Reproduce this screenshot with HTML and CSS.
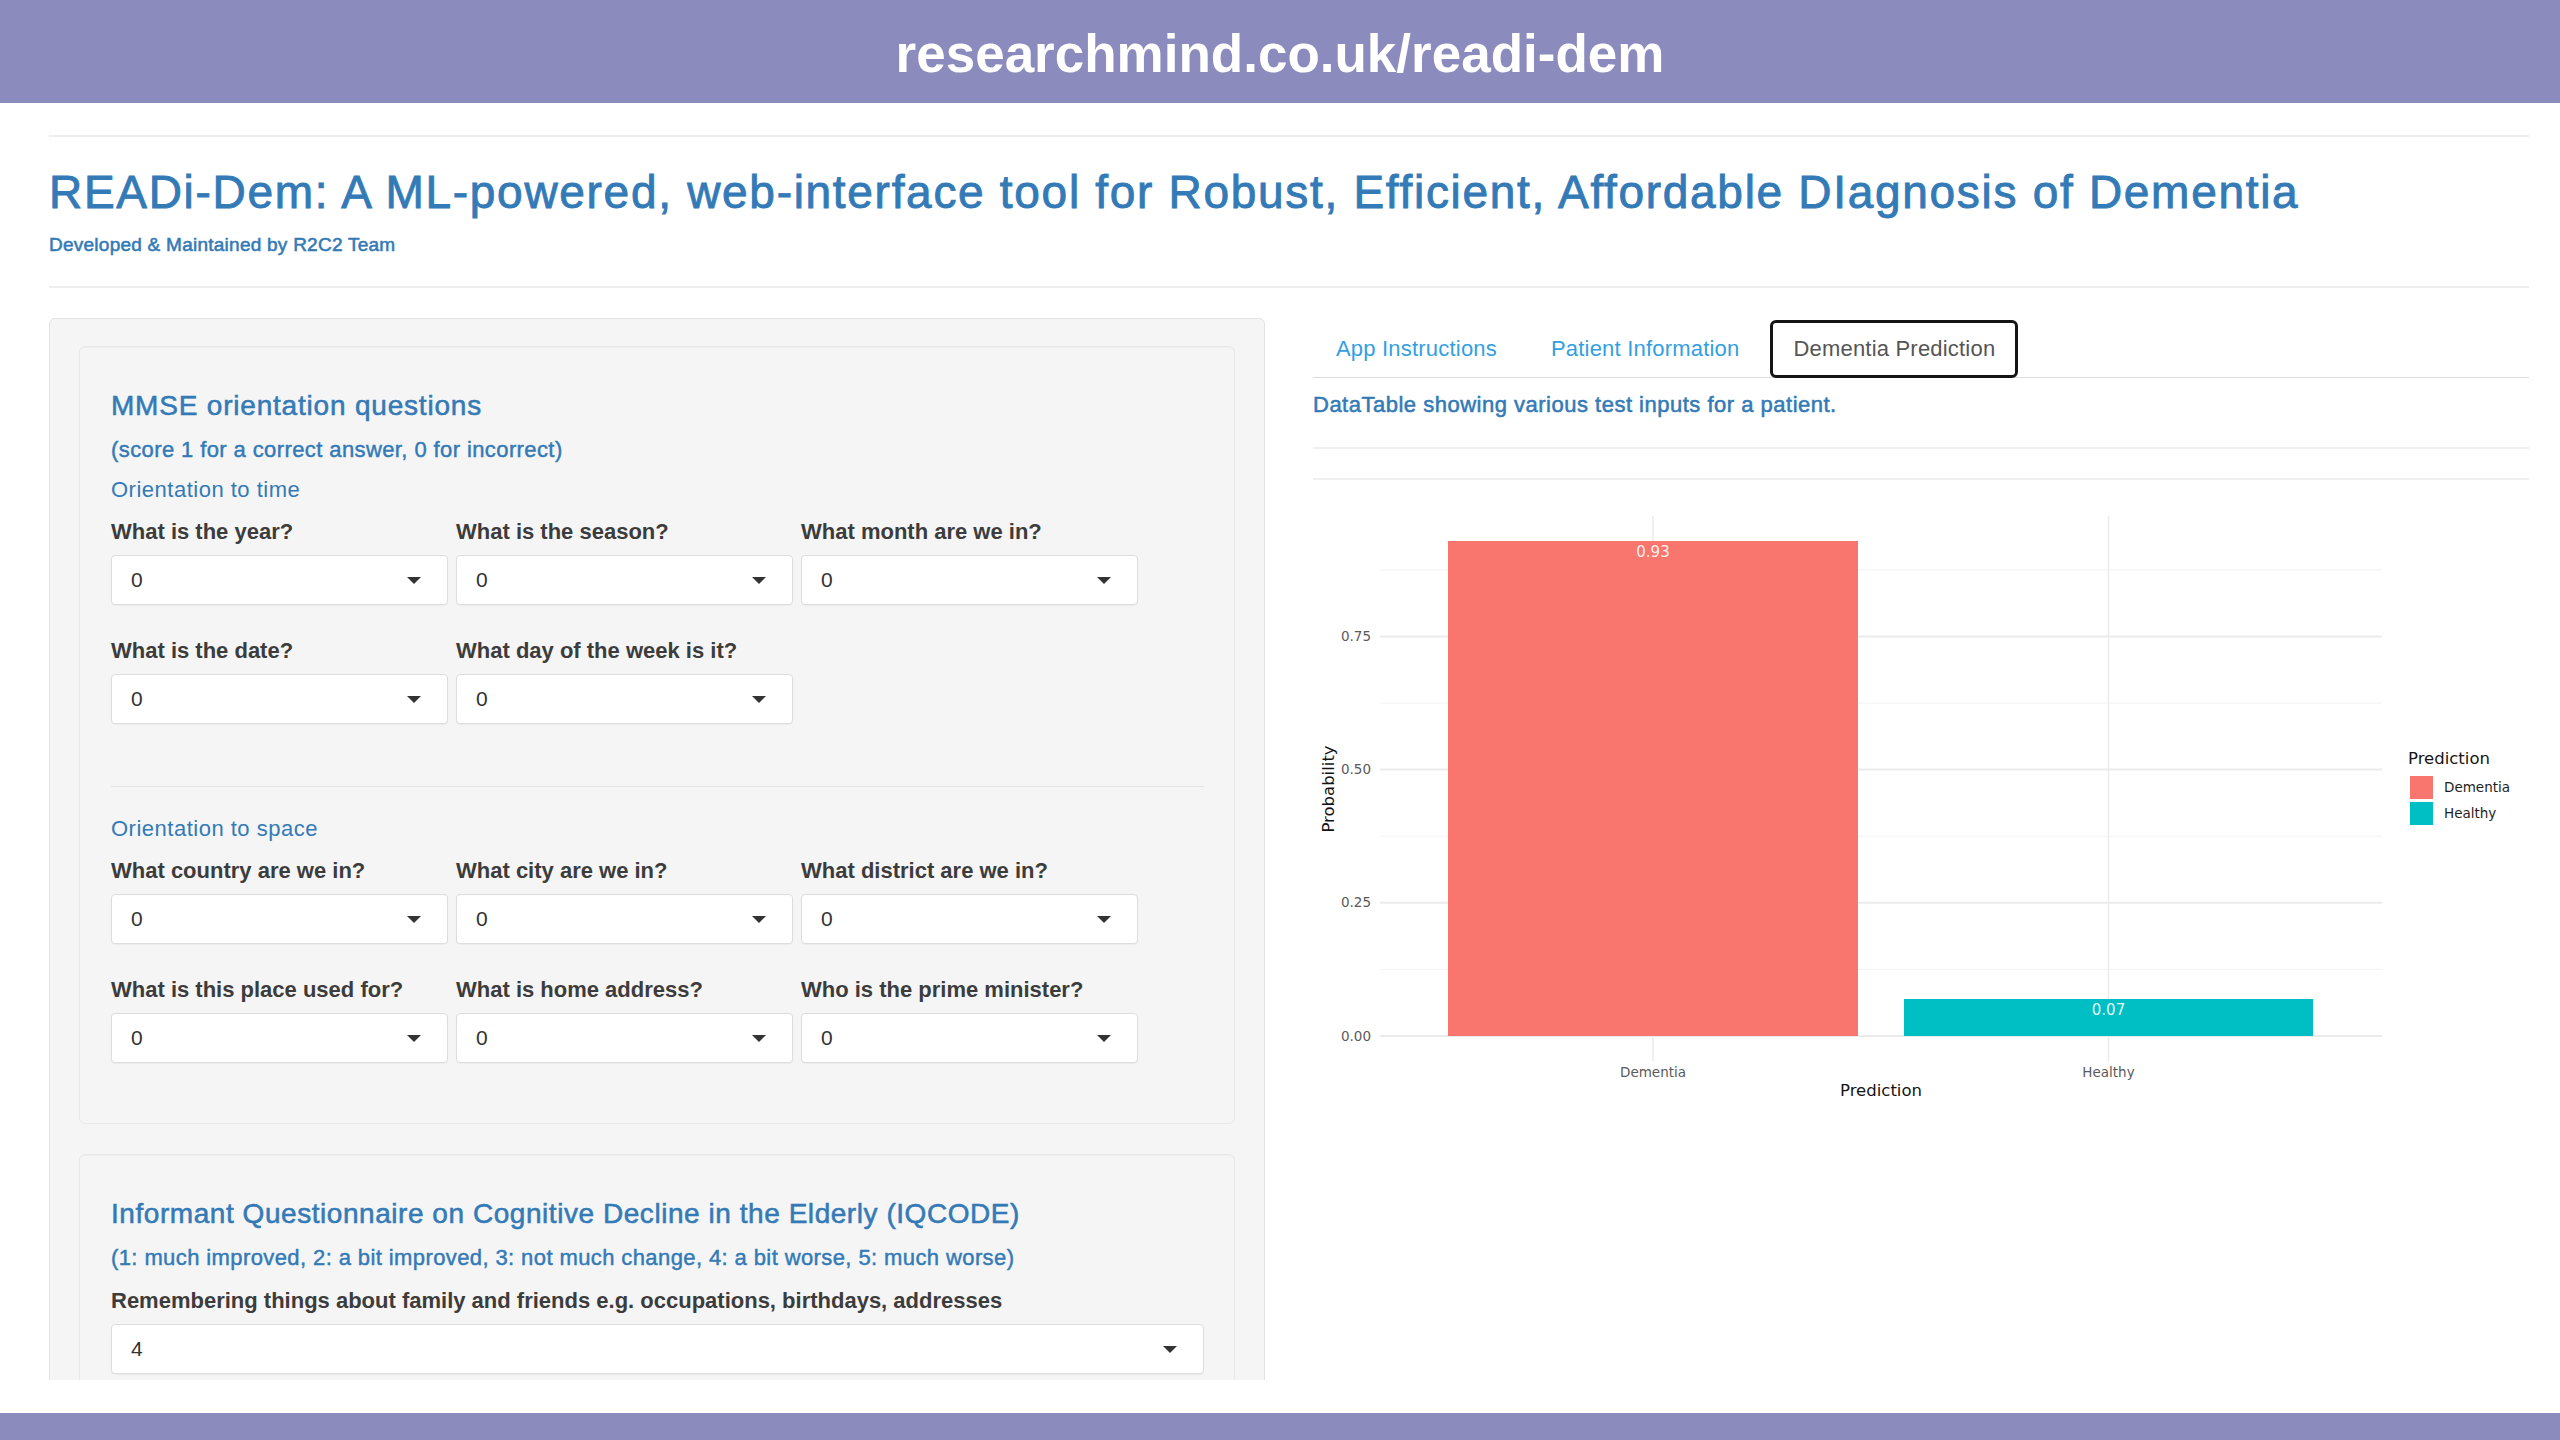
FILE: index.html
```html
<!DOCTYPE html>
<html lang="en">
  <head>
    <meta charset="UTF-8"/>
    <meta name="viewport" content="width=device-width, initial-scale=1.0">
    <link rel="stylesheet" href="styles.css">
    <title>READi-Dem</title>
  </head>
  <body>
    <header class="topbar">
      <p class="topbar_url">researchmind.co.uk/readi-dem</p>
    </header>

    <div class="page">
      <div class="page_inner">
        <hr class="pageRule"/>
        <h1 class="appTitle">READi-Dem: A ML-powered, web-interface tool for Robust, Efficient, Affordable DIagnosis of Dementia</h1>
        <p class="appSubtitle">Developed &amp; Maintained by R2C2 Team</p>
        <hr class="pageRule pageRule_bottom"/>

        <div class="layout">
          <!-- inputs -->
          <div class="sidebar">
            <div class="questionBlock">
              <h4 class="questionBlock_title questionBlock_title_mmse">MMSE orientation questions</h4>
              <h5 class="questionBlock_hint">(score 1 for a correct answer, 0 for incorrect)</h5>
              <p class="questionBlock_section">Orientation to time</p>
              <div class="selectGrid">
                <div class="field">
                  <label class="field_label">What is the year?</label>
                  <div class="fakeSelect"><span>0</span><span class="fakeSelect_caret"></span></div>
                </div>
                <div class="field">
                  <label class="field_label">What is the season?</label>
                  <div class="fakeSelect"><span>0</span><span class="fakeSelect_caret"></span></div>
                </div>
                <div class="field">
                  <label class="field_label">What month are we in?</label>
                  <div class="fakeSelect"><span>0</span><span class="fakeSelect_caret"></span></div>
                </div>
                <div class="field">
                  <label class="field_label">What is the date?</label>
                  <div class="fakeSelect"><span>0</span><span class="fakeSelect_caret"></span></div>
                </div>
                <div class="field">
                  <label class="field_label">What day of the week is it?</label>
                  <div class="fakeSelect"><span>0</span><span class="fakeSelect_caret"></span></div>
                </div>
              </div>

              <hr class="questionBlock_rule"/>

              <p class="questionBlock_section questionBlock_section_space">Orientation to space</p>
              <div class="selectGrid">
                <div class="field">
                  <label class="field_label">What country are we in?</label>
                  <div class="fakeSelect"><span>0</span><span class="fakeSelect_caret"></span></div>
                </div>
                <div class="field">
                  <label class="field_label">What city are we in?</label>
                  <div class="fakeSelect"><span>0</span><span class="fakeSelect_caret"></span></div>
                </div>
                <div class="field">
                  <label class="field_label">What district are we in?</label>
                  <div class="fakeSelect"><span>0</span><span class="fakeSelect_caret"></span></div>
                </div>
                <div class="field">
                  <label class="field_label">What is this place used for?</label>
                  <div class="fakeSelect"><span>0</span><span class="fakeSelect_caret"></span></div>
                </div>
                <div class="field">
                  <label class="field_label">What is home address?</label>
                  <div class="fakeSelect"><span>0</span><span class="fakeSelect_caret"></span></div>
                </div>
                <div class="field">
                  <label class="field_label">Who is the prime minister?</label>
                  <div class="fakeSelect"><span>0</span><span class="fakeSelect_caret"></span></div>
                </div>
              </div>
            </div>

            <div class="questionBlock">
              <h4 class="questionBlock_title">Informant Questionnaire on Cognitive Decline in the Elderly (IQCODE)</h4>
              <h5 class="questionBlock_hint">(1: much improved, 2: a bit improved, 3: not much change, 4: a bit worse, 5: much worse)</h5>
              <div class="field field_wide">
                <label class="field_label">Remembering things about family and friends e.g. occupations, birthdays, addresses</label>
                <div class="fakeSelect"><span>4</span><span class="fakeSelect_caret"></span></div>
              </div>
            </div>
          </div>

          <!-- results -->
          <div class="results">
            <ul class="tabs">
              <li class="tabs_item">App Instructions</li>
              <li class="tabs_item">Patient Information</li>
              <li class="tabs_item tabs_item_active">Dementia Prediction</li>
            </ul>
            <h5 class="results_caption">DataTable showing various test inputs for a patient.</h5>
            <hr class="results_rule"/>
            <hr class="results_rule results_rule_second"/>

            <svg class="predictionPlot" width="1216" height="600" viewBox="0 0 1216 600">
              <!-- minor grid -->
              <g stroke="#f2f2f2" stroke-width="1">
                <line x1="67" y1="470.4" x2="1069" y2="470.4"/>
                <line x1="67" y1="337.2" x2="1069" y2="337.2"/>
                <line x1="67" y1="204.1" x2="1069" y2="204.1"/>
                <line x1="67" y1="70.9" x2="1069" y2="70.9"/>
              </g>
              <!-- major grid -->
              <g stroke="#ebebeb" stroke-width="2">
                <line x1="67" y1="537" x2="1069" y2="537"/>
                <line x1="67" y1="403.8" x2="1069" y2="403.8"/>
                <line x1="67" y1="270.6" x2="1069" y2="270.6"/>
                <line x1="67" y1="137.5" x2="1069" y2="137.5"/>
                <line x1="340" y1="17" x2="340" y2="562" stroke-width="1.5"/>
                <line x1="795.5" y1="17" x2="795.5" y2="562" stroke-width="1.5"/>
              </g>

              <rect x="135" y="42" width="410" height="495" fill="#f8766d"/>
              <rect x="591" y="500" width="409" height="37" fill="#00bfc4"/>

              <g class="plotText plotText_bar" text-anchor="middle">
                <text x="340" y="58">0.93</text>
                <text x="795.5" y="516">0.07</text>
              </g>

              <g class="plotText plotText_tick" text-anchor="end">
                <text x="58" y="541.5">0.00</text>
                <text x="58" y="408.3">0.25</text>
                <text x="58" y="275.1">0.50</text>
                <text x="58" y="142">0.75</text>
              </g>
              <g class="plotText plotText_tick" text-anchor="middle">
                <text x="340" y="578">Dementia</text>
                <text x="795.5" y="578">Healthy</text>
              </g>

              <g class="plotText plotText_title">
                <text x="568" y="597" text-anchor="middle">Prediction</text>
                <text x="0" y="0" text-anchor="middle" transform="translate(21 290) rotate(-90)">Probability</text>
                <text x="1095" y="265">Prediction</text>
              </g>

              <!-- legend -->
              <rect x="1097" y="277" width="23" height="23" fill="#f8766d"/>
              <rect x="1097" y="303" width="23" height="23" fill="#00bfc4"/>
              <g class="plotText plotText_legend">
                <text x="1131" y="293">Dementia</text>
                <text x="1131" y="319">Healthy</text>
              </g>
            </svg>
          </div>
        </div>
      </div>
    </div>

    <div class="pageGap"></div>
    <footer class="bottombar"></footer>
  </body>
</html>
```

FILE: styles.css
```css
* {
  box-sizing: border-box;
}

body {
  margin: 0;
  width: 2560px;
  height: 1440px;
  overflow: hidden;
  background-color: rgb(255, 255, 255);
  font-family: "Liberation Sans", Arial, sans-serif;
  color: rgb(51, 51, 51);
}

/* purple bars */
.topbar {
  height: 103px;
  padding-top: 27px;
  background-color: rgb(140, 139, 189);
}
  .topbar_url {
    margin: 0;
    text-align: center;
    font-size: 53px;
    line-height: 1;
    font-weight: bold;
    color: rgb(255, 255, 255);
  }

.pageGap {
  height: 33px;
}

.bottombar {
  height: 27px;
  background-color: rgb(140, 139, 189);
}

/* page */
.page {
  height: 1277px;
  overflow: hidden;
}
  .page_inner {
    padding: 0 31px 0 49px;
  }

.pageRule {
  margin: 32px 0 0 0;
  height: 0;
  border: 0;
  border-top: 2px solid rgb(238, 238, 238);
}
  .pageRule_bottom {
    margin-top: 29px;
  }

.appTitle {
  margin: 30px 0 0 0;
  font-size: 46px;
  line-height: 50px;
  font-weight: normal;
  letter-spacing: 1.7px;
  color: rgb(51, 122, 183);
  -webkit-text-stroke: 0.9px rgb(51, 122, 183);
  white-space: nowrap;
}

.appSubtitle {
  margin: 16px 0 0 0;
  font-size: 19px;
  line-height: 24px;
  letter-spacing: 0.25px;
  color: rgb(51, 122, 183);
  -webkit-text-stroke: 0.55px rgb(51, 122, 183);
}

.layout {
  display: flex;
  gap: 48px;
  margin-top: 30px;
  align-items: flex-start;
}

/* left well */
.sidebar {
  width: 1216px;
  flex-shrink: 0;
  padding: 27px 29px 0 29px;
  background-color: rgb(245, 245, 245);
  border: 1px solid rgb(227, 227, 227);
  border-radius: 6px;
  display: flex;
  flex-direction: column;
  gap: 30px;
}
  .questionBlock {
    padding: 42px 30px 60px 31px;
    background-color: rgb(245, 245, 245);
    border: 1px solid rgb(232, 232, 232);
    border-radius: 6px;
    box-shadow: inset 0 1px 1px rgba(0, 0, 0, 0.03);
  }
    .questionBlock_title {
      margin: 0;
      font-size: 28px;
      line-height: 34px;
      font-weight: normal;
      letter-spacing: 0.55px;
      color: rgb(51, 122, 183);
      -webkit-text-stroke: 0.55px rgb(51, 122, 183);
    }
    .questionBlock_title_mmse {
      letter-spacing: 0.8px;
    }
    .questionBlock_hint {
      margin: 13px 0 0 0;
      font-size: 22px;
      line-height: 28px;
      font-weight: normal;
      letter-spacing: 0.4px;
      color: rgb(51, 122, 183);
      -webkit-text-stroke: 0.45px rgb(51, 122, 183);
    }
    .questionBlock_section {
      margin: 13px 0 0 0;
      font-size: 22px;
      line-height: 26px;
      letter-spacing: 0.5px;
      color: rgb(51, 122, 183);
    }
    .questionBlock_section_space {
      margin-top: 29px;
    }
    .questionBlock_rule {
      margin: 62px 0 0 0;
      height: 0;
      border: 0;
      border-top: 1px solid rgb(228, 228, 228);
    }

.selectGrid {
  display: grid;
  grid-template-columns: repeat(3, 337px);
  column-gap: 8px;
  row-gap: 33px;
  margin-top: 16px;
}

.field {
  display: flex;
  flex-direction: column;
}
  .field_wide {
    margin-top: 16px;
  }
  .field_label {
    margin-bottom: 10px;
    font-size: 22px;
    line-height: 26px;
    font-weight: bold;
    color: rgb(60, 60, 60);
    white-space: nowrap;
  }

.fakeSelect {
  height: 50px;
  display: flex;
  align-items: center;
  justify-content: space-between;
  padding: 0 26px 0 19px;
  background-color: rgb(255, 255, 255);
  border: 1px solid rgb(221, 221, 221);
  border-radius: 4px;
  box-shadow: 0 1px 1px rgba(0, 0, 0, 0.04);
  font-size: 21px;
  color: rgb(51, 51, 51);
}
  .fakeSelect_caret {
    width: 0;
    height: 0;
    border-left: 7px solid transparent;
    border-right: 7px solid transparent;
    border-top: 7px solid rgb(51, 51, 51);
  }

/* right column */
.results {
  width: 1216px;
  flex-shrink: 0;
}
  .tabs {
    display: flex;
    margin: 2px 0 0 0;
    padding: 0;
    list-style: none;
    border-bottom: 1px solid rgb(221, 221, 221);
  }
    .tabs_item {
      height: 58px;
      margin: 0 8px -1px 0;
      padding: 13px 20px;
      border: 3px solid transparent;
      border-radius: 6px;
      font-size: 22px;
      line-height: 26px;
      letter-spacing: 0.2px;
      color: rgb(51, 159, 226);
    }
    .tabs_item_active {
      border-color: rgb(20, 20, 20);
      color: rgb(85, 85, 85);
      background-color: rgb(255, 255, 255);
    }
  .results_caption {
    margin: 13px 0 0 0;
    font-size: 22px;
    line-height: 28px;
    font-weight: normal;
    letter-spacing: 0.5px;
    color: rgb(51, 122, 183);
    -webkit-text-stroke: 0.55px rgb(51, 122, 183);
  }
  .results_rule {
    margin: 28px 0 0 0;
    height: 0;
    border: 0;
    border-top: 2px solid rgb(240, 240, 240);
  }
  .results_rule_second {
    margin-top: 29px;
  }

.predictionPlot {
  display: block;
  margin-top: 19px;
}
  .plotText {
    font-family: "DejaVu Sans", sans-serif;
  }
  .plotText_bar {
    font-size: 15px;
    fill: rgb(255, 255, 255);
    fill-opacity: 0.9;
  }
  .plotText_tick {
    font-size: 13.5px;
    fill: rgb(90, 90, 90);
  }
  .plotText_title {
    font-size: 16.5px;
    fill: rgb(20, 20, 20);
  }
  .plotText_legend {
    font-size: 13.5px;
    fill: rgb(30, 30, 30);
  }
```
